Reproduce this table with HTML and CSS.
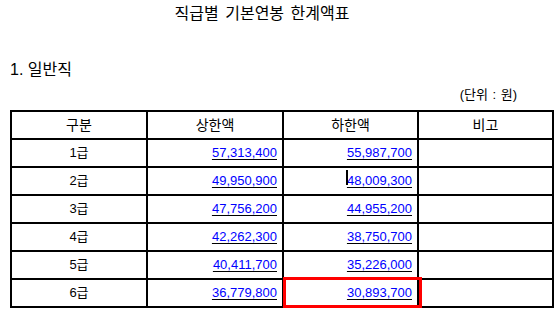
FILE: index.html
```html
<!DOCTYPE html>
<html lang="ko">
<head>
<meta charset="utf-8">
<link rel="stylesheet" href="styles.css">
</head>
<body>
<div class="page">
  <h1 class="title">직급별 기본연봉 한계액표</h1>
  <h2 class="section">1. 일반직</h2>
  <div class="unit">(단위 : 원)</div>
  <div class="table-wrap">
    <table class="grid">
      <colgroup>
        <col class="c1"><col class="c2"><col class="c3"><col class="c4">
      </colgroup>
      <thead>
        <tr><th>구분</th><th>상한액</th><th>하한액</th><th>비고</th></tr>
      </thead>
      <tbody>
        <tr><td class="grade">1급</td><td class="num"><a href="#">57,313,400</a></td><td class="num"><a href="#">55,987,700</a></td><td></td></tr>
        <tr><td class="grade">2급</td><td class="num"><a href="#">49,950,900</a></td><td class="num"><a class="caret" href="#">48,009,300</a></td><td></td></tr>
        <tr><td class="grade">3급</td><td class="num"><a href="#">47,756,200</a></td><td class="num"><a href="#">44,955,200</a></td><td></td></tr>
        <tr><td class="grade">4급</td><td class="num"><a href="#">42,262,300</a></td><td class="num"><a href="#">38,750,700</a></td><td></td></tr>
        <tr><td class="grade">5급</td><td class="num"><a href="#">40,411,700</a></td><td class="num"><a href="#">35,226,000</a></td><td></td></tr>
        <tr><td class="grade">6급</td><td class="num"><a href="#">36,779,800</a></td><td class="num"><a href="#">30,893,700</a></td><td></td></tr>
      </tbody>
    </table>
    <div class="highlight"></div>
  </div>
</div>
</body>
</html>
```

FILE: styles.css
```css
html, body {
  margin: 0;
  padding: 0;
  background: #fff;
}
body {
  font-family: "Liberation Sans", "Noto Sans CJK KR", sans-serif;
  color: #000;
}
.page {
  width: 557px;
}
.title {
  margin: 0;
  padding: 4px 33px 0 0;
  font-size: 16px;
  font-weight: normal;
  line-height: 20px;
  text-align: center;
  word-spacing: 2px;
}
.section {
  margin: 0;
  padding: 36px 0 0 10px;
  font-size: 16px;
  font-weight: normal;
  line-height: 20px;
}
.unit {
  padding: 6px 40px 0 0;
  font-size: 13px;
  line-height: 18px;
  text-align: right;
  word-spacing: 1px;
}
.table-wrap {
  position: relative;
  margin: 6px 0 0 10px;
  width: 542px;
}
.grid {
  border-collapse: collapse;
  table-layout: fixed;
  width: 542px;
  font-size: 13px;
}
.c1 { width: 136px; }
.c2 { width: 136px; }
.c3 { width: 135px; }
.c4 { width: 135px; }
.grid tr {
  height: 28px;
}
.grid th,
.grid td {
  border: 2px solid #000;
  padding: 0 5px;
  font-weight: normal;
  line-height: 16px;
}
.grid th { text-align: center; font-size: 14px; }
.grade { text-align: center; }
.num { text-align: right; }
.num a {
  color: #0000ff;
  text-decoration: underline;
  text-decoration-color: #000;
  text-underline-offset: 2px;
}
.caret {
  position: relative;
}
.caret::before {
  content: "";
  position: absolute;
  left: -1px;
  top: -3px;
  width: 2px;
  height: 15px;
  background: #000;
}
.highlight {
  position: absolute;
  left: 273px;
  top: 167px;
  width: 133px;
  height: 25px;
  border: 3px solid #f00;
}
```
